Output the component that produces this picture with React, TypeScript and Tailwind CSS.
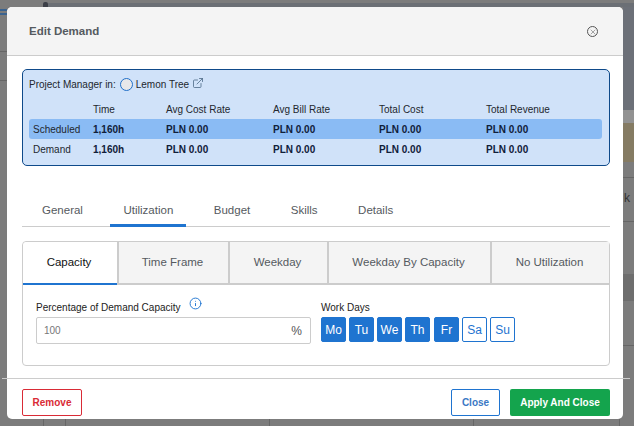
import type { ReactNode } from "react"
import { ExternalLink, Info, X } from "lucide-react"

const summaryRows = [
  { label: "Scheduled", active: true },
  { label: "Demand", active: false },
]

const tabs = ["General", "Utilization", "Budget", "Skills", "Details"]

const subTabs = [
  { name: "Capacity", cls: "w-[94px]" },
  { name: "Time Frame", cls: "w-[111px]" },
  { name: "Weekday", cls: "w-[99px]" },
  { name: "Weekday By Capacity", cls: "w-[163px]" },
  { name: "No Utilization", cls: "flex-1" },
]

const days = [
  { name: "Mo", on: true },
  { name: "Tu", on: true },
  { name: "We", on: true },
  { name: "Th", on: true },
  { name: "Fr", on: true },
  { name: "Sa", on: false },
  { name: "Su", on: false },
]

function SummaryCell({ w, bold, children }: { w: string; bold?: boolean; children: ReactNode }) {
  return <div className={`${w} ${bold ? "font-bold text-[#10203a]" : ""}`}>{children}</div>
}

// dimmed page behind the modal
function Backdrop() {
  return (
    <>
      <div className="absolute left-[48px] right-0 top-[3px] h-[4px] bg-[#6b6f75]" />
      <div className="absolute left-[43px] top-[2px] w-[5px] h-[5px] rounded-t-[2px] bg-[#3c3f47]" />
      <div className="absolute left-0 top-[9px] w-[7px] h-[2px] bg-[#3a6390]" />
      <div className="absolute left-0 top-[13px] w-[7px] h-[2px] bg-[#3a6390]" />
      <div className="absolute left-0 top-[51px] w-[7px] h-px bg-[#666666]" />
      <div className="absolute left-0 top-[80px] w-[7px] h-px bg-[#666666]" />
      <div className="absolute right-0 top-[7px] w-[11px] h-[103px] bg-[#6c7078]" />
      <div className="absolute right-0 top-[110px] w-[11px] h-[13px] bg-[#929292]" />
      <div className="absolute right-0 top-[123px] w-[11px] h-[39px] bg-[#857b63]" />
      <div className="absolute right-0 top-[177px] w-[11px] h-px bg-[#666666]" />
      <div className="absolute right-0 top-[221px] w-[11px] h-px bg-[#666666]" />
      <div className="absolute right-0 top-[274px] w-[11px] h-[27px] bg-[#6e6e6e]" />
      <div className="absolute right-0 top-[345px] w-[11px] h-px bg-[#666666]" />
      <div className="absolute left-[624px] top-[191px] text-[12px] leading-[14px] text-[#333333]">k</div>
      <div className="absolute left-[2px] top-[378px] w-[6px] h-px bg-[#cccccc]" />
      <div className="absolute left-[622px] top-[378px] w-[8px] h-px bg-[#cccccc]" />
      <div className="absolute left-[43px] top-[419px] w-px h-[7px] bg-[#666666]" />
      <div className="absolute left-[65px] top-[419px] w-px h-[7px] bg-[#666666]" />
      <div className="absolute left-[269px] top-[419px] w-px h-[7px] bg-[#666666]" />
      <div className="absolute left-[473px] top-[419px] w-px h-[7px] bg-[#666666]" />
      <div className="absolute left-[619px] top-[419px] w-px h-[7px] bg-[#666666]" />
    </>
  )
}

export default function App() {
  return (
    <div className="font-[family-name:Liberation_Sans,Arial,sans-serif] relative w-[634px] h-[426px] overflow-hidden bg-[#7c7c7c] pl-[7px] pt-[7px]">
      <Backdrop />
      <div className="relative w-[616px] h-[412px] rounded-[5px] bg-white flex flex-col overflow-hidden">
        <div className="h-[49px] shrink-0 bg-[#f4f4f4] border-b border-[#cccccc] flex items-center justify-between pl-[22px] pr-[25px] pt-[1px]">
          <span className="text-[11.5px] font-bold text-[#555a60]">Edit Demand</span>
          <span className="w-[11px] h-[11px] rounded-full border border-[#555555] flex items-center justify-center">
            <X size={8} strokeWidth={1.5} className="text-[#555555]" />
          </span>
        </div>

        <div className="flex-1 pl-[15px] pr-[13px] pt-[13px]">
          <div className="h-[97px] rounded-[5px] border border-[#0f4a8a] bg-[#d0e2f9] pl-[6px] pr-[7px] text-[10px] text-[#22272e]">
            <div className="h-[29px] flex items-center">
              <span>Project Manager in:</span>
              <span className="ml-[4px] w-[13px] h-[13px] rounded-full border border-[#1f6fc9] bg-[#e8e8ea]" />
              <span className="ml-[3px]">Lemon Tree</span>
              <ExternalLink size={12} strokeWidth={1.5} className="ml-[3px] -mt-[4px] text-[#44627f]" />
            </div>
            <div className="h-[20px] flex items-center pl-[64px]">
              <SummaryCell w="w-[73px]">Time</SummaryCell>
              <SummaryCell w="w-[107px]">Avg Cost Rate</SummaryCell>
              <SummaryCell w="w-[106px]">Avg Bill Rate</SummaryCell>
              <SummaryCell w="w-[107px]">Total Cost</SummaryCell>
              <SummaryCell w="w-[100px]">Total Revenue</SummaryCell>
            </div>
            {summaryRows.map((row) => (
              <div
                key={row.label}
                className={`h-[20px] flex items-center rounded-[3px] pl-[4px] ${row.active ? "bg-[#8abbf4]" : ""}`}
              >
                <div className="w-[60px]">{row.label}</div>
                <SummaryCell w="w-[73px]" bold>1,160h</SummaryCell>
                <SummaryCell w="w-[107px]" bold>PLN 0.00</SummaryCell>
                <SummaryCell w="w-[106px]" bold>PLN 0.00</SummaryCell>
                <SummaryCell w="w-[107px]" bold>PLN 0.00</SummaryCell>
                <SummaryCell w="w-[100px]" bold>PLN 0.00</SummaryCell>
              </div>
            ))}
          </div>

          <div className="mt-[30px] h-[31px] flex gap-[14.5px] pl-[7px] border-b border-[#cccccc] text-[11.5px] text-[#555a60]">
            {tabs.map((tab) => (
              <div
                key={tab}
                className={`h-[31px] px-[13px] pt-[6px] ${tab === "Utilization" ? "border-b-[3px] border-[#1f74d0]" : ""}`}
              >
                {tab}
              </div>
            ))}
          </div>

          <div className="mt-[14px] h-[125px] rounded-[4px] border border-[#cccccc]">
            <div className="h-[43px] flex text-[11.5px] text-[#555a60]">
              {subTabs.map((tab) => (
                <div
                  key={tab.name}
                  className={`${tab.cls} flex items-center justify-center pt-[1px] ${
                    tab.name === "Capacity"
                      ? "bg-white text-[#111111] border-b-2 border-[#1f74d0] rounded-tl-[4px] pr-[2px]"
                      : "bg-[#f4f4f4] border-l-2 border-b-2 border-[#cccccc] pr-[2px]"
                  }`}
                >
                  {tab.name}
                </div>
              ))}
            </div>
            <div className="flex pl-[13px] pt-[13px]">
              <div className="w-[275px]">
                <div className="h-[18px] flex text-[10px] text-[#222222] pt-[2px]">
                  <span>Percentage of Demand Capacity</span>
                  <Info size={13} strokeWidth={1.75} className="ml-[8px] -mt-[3px] text-[#1f74d0]" />
                </div>
                <div className="h-[27px] mt-[1px] border border-[#cccccc] rounded-[2px] flex items-center justify-between pl-[7px] pr-[8px]">
                  <span className="text-[10px] text-[#777777]">100</span>
                  <span className="text-[12px] text-[#555555]">%</span>
                </div>
              </div>
              <div className="ml-[10px]">
                <div className="h-[18px] text-[10px] text-[#222222] pt-[2px]">Work Days</div>
                <div className="mt-[1px] flex gap-[3px]">
                  {days.map((day) => (
                    <div
                      key={day.name}
                      className={`w-[25px] h-[25px] rounded-[2px] flex items-center justify-center text-[12px] border border-[#1f74d0] ${
                        day.on ? "bg-[#1f74d0] text-white" : "bg-white text-[#1f74d0]"
                      } ${day.name === "Fr" ? "ml-[1px]" : ""}`}
                    >
                      {day.name}
                    </div>
                  ))}
                </div>
              </div>
            </div>
          </div>
        </div>

        <div className="h-[41px] shrink-0 border-t border-[#cccccc] pl-[15px] pr-[13px] flex items-start justify-between pt-[10px] text-[10px] font-bold">
          <button className="w-[60px] h-[27px] rounded-[2px] border border-[#d92b36] text-[#d92b36]">Remove</button>
          <div className="flex gap-[10px]">
            <button className="w-[49px] h-[27px] rounded-[2px] border border-[#1f74d0] text-[#3a78c4]">Close</button>
            <button className="w-[100px] h-[27px] rounded-[2px] bg-[#14a44d] text-white">Apply And Close</button>
          </div>
        </div>
      </div>
    </div>
  )
}
